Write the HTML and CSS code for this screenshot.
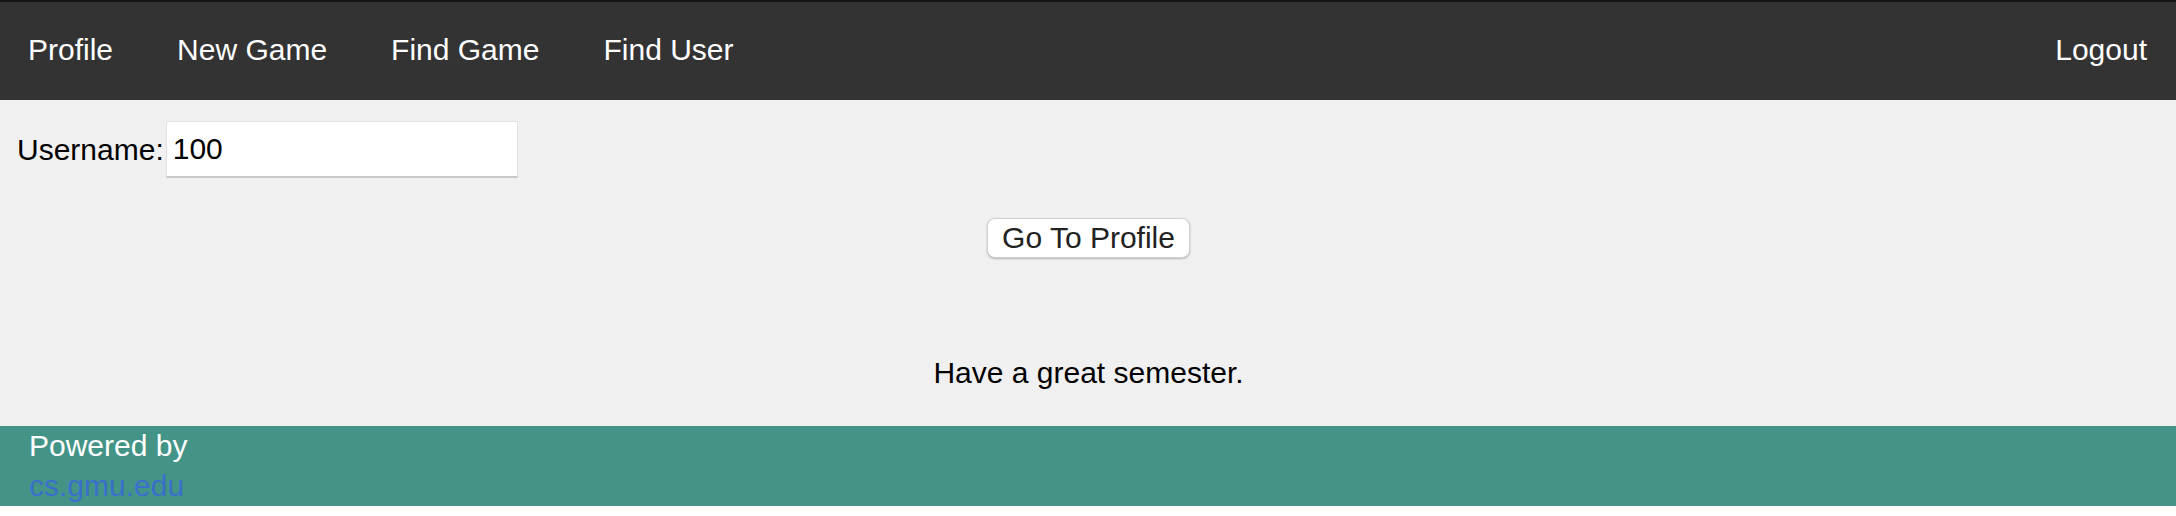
FILE: index.html
```html
<!DOCTYPE html>
<html>
<head>
<meta charset="utf-8">
<title>Find User</title>
<link rel="stylesheet" href="styles.css">
</head>
<body>
<div class="page">
  <nav class="topnav">
    <div class="nav-left">
      <a class="nav-link" href="#">Profile</a>
      <a class="nav-link" href="#">New Game</a>
      <a class="nav-link" href="#">Find Game</a>
      <a class="nav-link" href="#">Find User</a>
    </div>
    <a class="nav-link logout" href="#">Logout</a>
  </nav>
  <main class="content">
    <div class="form-row">
      <label class="label" for="username">Username:</label><input class="text-input" id="username" type="text" value="100">
    </div>
    <div class="button-row">
      <button class="btn" type="button">Go To Profile</button>
    </div>
    <p class="message">Have a great semester.</p>
  </main>
  <footer class="footer">
    <div class="footer-line">Powered by</div>
    <div class="footer-line"><a class="footer-link" href="#">cs.gmu.edu</a></div>
  </footer>
</div>
</body>
</html>
```
FILE: styles.css
```css
* {
  box-sizing: border-box;
}

html, body {
  margin: 0;
  padding: 0;
  background: #ffffff;
}

body {
  font-family: "Liberation Sans", Arial, Helvetica, sans-serif;
  font-size: 30px;
  color: #000;
}

.page {
  display: flex;
  flex-direction: column;
  background: #f0f0f0;
}

.topnav {
  display: flex;
  justify-content: space-between;
  align-items: center;
  height: 100px;
  background: #333333;
  border-top: 2px solid #151515;
  padding: 0 29px 0 28px;
}

.nav-left {
  display: flex;
  align-items: center;
  gap: 64px;
}

.nav-link {
  color: #ffffff;
  text-decoration: none;
  line-height: 1;
  padding-bottom: 2px;
}

.content {
  display: flex;
  flex-direction: column;
  padding: 21px 16px 0 17px;
  height: 326px;
}

.form-row {
  display: flex;
  align-items: center;
}

.label {
  margin-right: 2px;
}

.text-input {
  width: 352px;
  height: 57px;
  font-family: inherit;
  font-size: 30px;
  color: #000;
  padding: 0 6px;
  background: #ffffff;
  border: 1px solid #e2e2e2;
  border-bottom: 2px solid #c9c9c9;
  border-radius: 0;
  outline: none;
}

.button-row {
  display: flex;
  justify-content: center;
  margin-top: 40px;
}

.btn {
  height: 40px;
  padding: 0 14px;
  font-family: inherit;
  font-size: 30px;
  line-height: 1;
  color: #222222;
  background: #ffffff;
  border: 1px solid #d0d0d0;
  border-radius: 8px;
  box-shadow: 0 1px 2px rgba(0, 0, 0, 0.25);
}

.message {
  margin: 98px 0 0 0;
  text-align: center;
  line-height: 34.5px;
}

.footer {
  background: #439487;
  color: #ffffff;
  padding: 0 29px;
  height: 80px;
}

.footer-line {
  line-height: 40px;
}

.footer-link {
  color: #3a6fcb;
  text-decoration: none;
}
```
